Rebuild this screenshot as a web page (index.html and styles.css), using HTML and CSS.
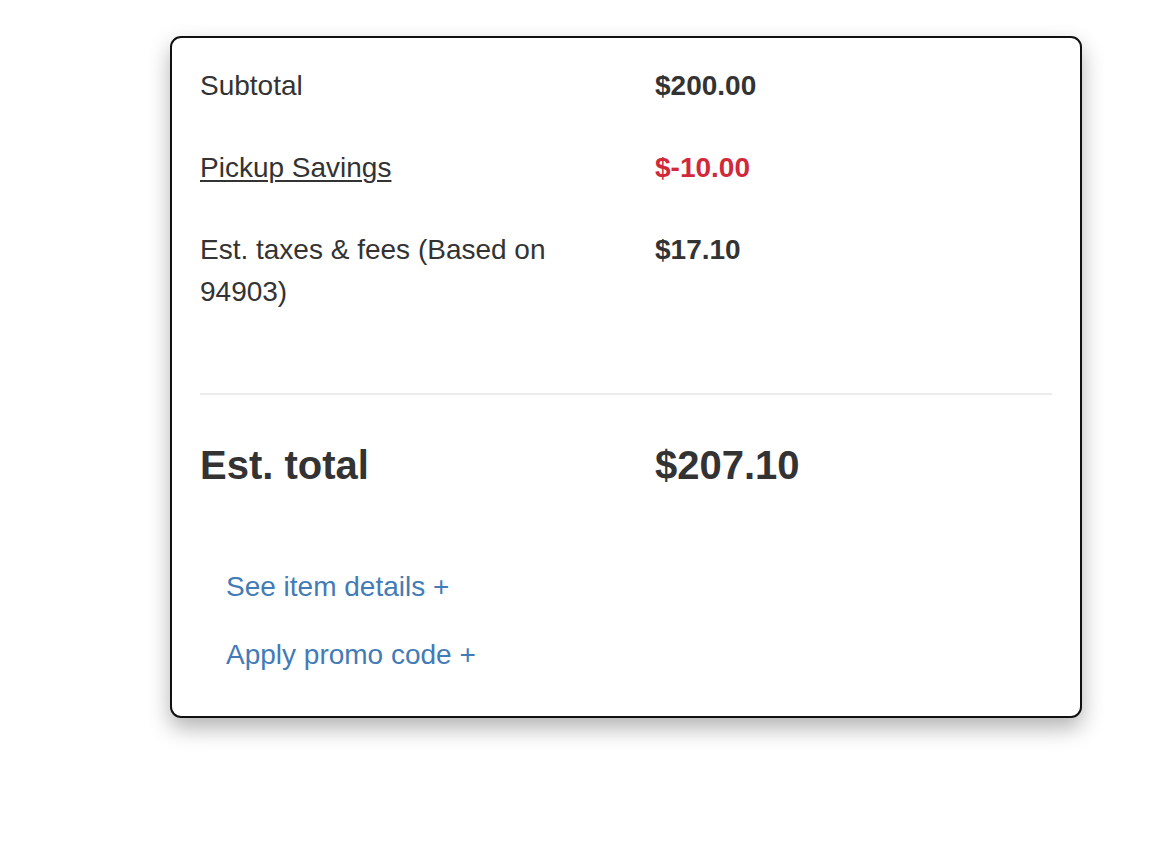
FILE: index.html
```html
<!DOCTYPE html>
<html lang="en">
<head>
<meta charset="utf-8">
<title>Order summary</title>
<link rel="stylesheet" href="styles.css">
</head>
<body>
<div class="page">
  <section class="summary">
    <div class="lines">
      <div class="row">
        <div class="label">Subtotal</div>
        <div class="amount">$200.00</div>
      </div>
      <div class="row">
        <div class="label"><a class="plain-link" href="#">Pickup Savings</a></div>
        <div class="amount savings">$-10.00</div>
      </div>
      <div class="row">
        <div class="label">Est. taxes &amp; fees (Based on 94903)</div>
        <div class="amount">$17.10</div>
      </div>
    </div>
    <div class="divider"></div>
    <div class="row total">
      <div class="label">Est. total</div>
      <div class="amount">$207.10</div>
    </div>
    <div class="actions">
      <a class="action" href="#">See item details +</a>
      <a class="action" href="#">Apply promo code +</a>
    </div>
  </section>
</div>
</body>
</html>
```

FILE: styles.css
```css
* { box-sizing: border-box; }

html, body {
  margin: 0;
  padding: 0;
  background: #ffffff;
}

body {
  font-family: "Liberation Sans", Arial, Helvetica, sans-serif;
  color: #333333;
  font-size: 28px;
  line-height: 42px;
  min-height: 858px;
}

.page {
  padding: 36px 0 140px 170px;
}

.summary {
  width: 912px;
  height: 682px;
  border: 2px solid #111111;
  border-radius: 11px;
  background: #ffffff;
  box-shadow: 0 10px 22px rgba(0, 0, 0, 0.3);
  padding: 27px 28px 0 28px;
}

.lines {
  display: flex;
  flex-direction: column;
  gap: 40px;
  padding-bottom: 40px;
}

.row {
  display: grid;
  grid-template-columns: 455px 1fr;
}

.label {
  padding-right: 60px;
}

.amount {
  font-weight: bold;
}

.savings {
  color: #d1283a;
}

.plain-link {
  color: #333333;
  text-decoration: underline;
  text-underline-offset: 3px;
  text-decoration-thickness: 2px;
}

.divider {
  height: 2px;
  background: #ebebeb;
  margin-top: 40px;
}

.total {
  margin-top: 40px;
  font-size: 40px;
  line-height: 60px;
  font-weight: bold;
}

.actions {
  display: flex;
  flex-direction: column;
  gap: 26px;
  padding: 71px 0 0 26px;
}

.action {
  color: #437bb7;
  text-decoration: none;
  align-self: flex-start;
}
```
